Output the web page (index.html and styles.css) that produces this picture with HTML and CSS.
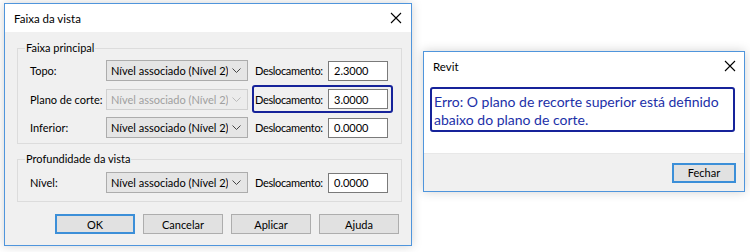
FILE: index.html
```html
<!DOCTYPE html>
<html lang="pt">
<head>
<meta charset="utf-8">
<link rel="stylesheet" href="styles.css">
<title>Faixa da vista</title>
</head>
<body>
<div class="win main-win">
  <div class="titlebar">
    <span class="title">Faixa da vista</span>
    <svg class="close" width="12" height="12" viewBox="0 0 12 12"><path d="M1 1L11 11M11 1L1 11" stroke="#000" stroke-width="1.1" fill="none"/></svg>
  </div>
  <div class="body">
    <fieldset class="group g1">
      <legend>Faixa principal</legend>
      <div class="row">
        <span class="lbl">Topo:</span>
        <div class="combo"><span class="ctext">Nível associado (Nível 2)</span><svg class="chev" width="9" height="5" viewBox="0 0 9 5"><path d="M0.5 0.5L4.5 4.5L8.5 0.5" stroke="#444" fill="none"/></svg></div>
        <span class="lbl2">Deslocamento:</span>
        <div class="input">2.3000</div>
      </div>
      <div class="row">
        <span class="lbl">Plano de corte:</span>
        <div class="combo disabled"><span class="ctext">Nível associado (Nível 2)</span><svg class="chev" width="9" height="5" viewBox="0 0 9 5"><path d="M0.5 0.5L4.5 4.5L8.5 0.5" stroke="#bbb" fill="none"/></svg></div>
        <span class="lbl2">Deslocamento:</span>
        <div class="input">3.0000</div>
        <div class="hl"></div>
      </div>
      <div class="row">
        <span class="lbl">Inferior:</span>
        <div class="combo"><span class="ctext">Nível associado (Nível 2)</span><svg class="chev" width="9" height="5" viewBox="0 0 9 5"><path d="M0.5 0.5L4.5 4.5L8.5 0.5" stroke="#444" fill="none"/></svg></div>
        <span class="lbl2">Deslocamento:</span>
        <div class="input">0.0000</div>
      </div>
    </fieldset>
    <fieldset class="group g2">
      <legend>Profundidade da vista</legend>
      <div class="row">
        <span class="lbl">Nível:</span>
        <div class="combo"><span class="ctext">Nível associado (Nível 2)</span><svg class="chev" width="9" height="5" viewBox="0 0 9 5"><path d="M0.5 0.5L4.5 4.5L8.5 0.5" stroke="#444" fill="none"/></svg></div>
        <span class="lbl2">Deslocamento:</span>
        <div class="input">0.0000</div>
      </div>
    </fieldset>
    <div class="buttons">
      <button class="btn default">OK</button>
      <button class="btn">Cancelar</button>
      <button class="btn">Aplicar</button>
      <button class="btn">Ajuda</button>
    </div>
  </div>
</div>

<div class="win msg-win">
  <div class="msg-top">
    <div class="titlebar small">
      <span class="title">Revit</span>
      <svg class="close" width="12" height="12" viewBox="0 0 12 12"><path d="M1 1L11 11M11 1L1 11" stroke="#000" stroke-width="1.1" fill="none"/></svg>
    </div>
    <div class="err">Erro: O plano de recorte superior está definido abaixo do plano de corte.</div>
  </div>
  <div class="msg-foot">
    <button class="btn default fechar">Fechar</button>
  </div>
</div>
</body>
</html>
```
FILE: styles.css
```css
* { box-sizing: border-box; }
html, body { margin: 0; padding: 0; }
body {
  width: 750px;
  height: 252px;
  background: #ffffff;
  font-family: Lato, "Noto Sans", sans-serif;
  font-size: 11px;
  color: #000;
  position: relative;
  overflow: hidden;
}
.win {
  position: absolute;
  border: 1px solid #4f95dc;
  background: #f0f0f0;
  box-shadow: 0 0 10px rgba(0,0,0,0.18);
}
.main-win { left: 4px; top: 3px; width: 408px; height: 243px; display: flex; flex-direction: column; }
.titlebar {
  height: 28px;
  background: #fff;
  display: flex;
  align-items: center;
  justify-content: space-between;
  padding: 0 9px 0 9px;
  flex: none;
}
.title { font-size: 11.5px; }
.body { flex: 1; padding: 9px 9px 0 12px; display: flex; flex-direction: column; }
.group {
  margin: 0;
  border: 1px solid #dcdcdc;
  border-radius: 0;
  padding: 0 0 0 12px;
  white-space: nowrap;
  flex: none;
}
.group legend { padding: 0 1px; margin-left: -5px; line-height: 14px; }
.g1 { height: 103px; padding-top: 5px; }
.g2 { height: 50px; margin-top: 8px; padding-top: 6px; }
.row { display: flex; align-items: center; height: 21px; margin-bottom: 7.5px; position: relative; }
.row > * { flex: none; }
.lbl { width: 76px; }
.combo {
  width: 142px; height: 21px;
  background: #e5e5e5;
  border: 1px solid #acacac;
  display: flex; align-items: center; justify-content: space-between;
  padding: 0 6px 0 4px;
}
.ctext { overflow: hidden; }
.chev { flex: none; }
.combo.disabled { background: #ececec; border-color: #d0d0d0; color: #a0a0a0; }
.lbl2 { margin-left: 7px; width: 73px; letter-spacing: -0.35px; }
.input {
  width: 60px; height: 20px;
  background: #fff;
  border: 1px solid #7a7a7a;
  padding: 0 0 0 5px;
  display: flex; align-items: center;
}
.hl {
  position: absolute;
  left: 222px; top: -4px;
  width: 141px; height: 28px;
  border: 2px solid #16239a;
  border-radius: 3px;
}
.buttons { display: flex; gap: 8px; margin-top: 12px; padding-left: 38px; }
.btn {
  width: 80px; height: 20px;
  background: #e1e1e1;
  border: 1px solid #adadad;
  font-family: inherit;
  font-size: 11px;
  color: #000;
  padding: 0;
}
.btn.default { border: 2px solid #3c8fd8; }
.msg-win { left: 423px; top: 51px; width: 322px; height: 141px; display: flex; flex-direction: column; }
.msg-top { background: #fff; height: 102px; border-bottom: 1px solid #e8e8e8; }
.titlebar.small { height: 28px; padding: 0 8px 0 9px; }
.err {
  margin: 7px 9px 0 6px;
  height: 45px;
  border: 2px solid #16239a;
  border-radius: 3px;
  color: #1c30a8;
  font-size: 14px;
  line-height: 18px;
  padding: 4px 2px 0 2px;
}
.msg-foot { flex: 1; display: flex; justify-content: flex-end; align-items: center; padding-right: 8px; }
.fechar { width: 64px; height: 20px; }
```
